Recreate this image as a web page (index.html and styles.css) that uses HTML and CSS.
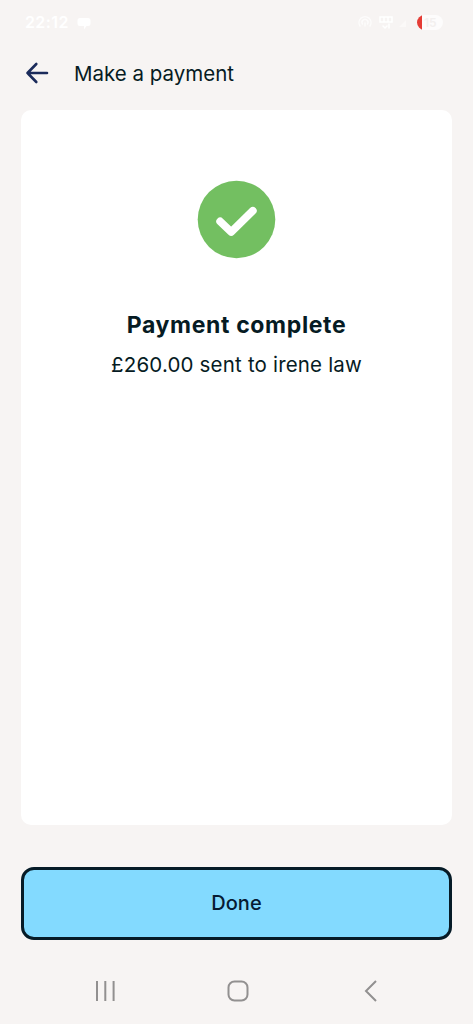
FILE: index.html
```html
<!DOCTYPE html>
<html lang="en">
<head>
<meta charset="utf-8">
<title>Make a payment</title>
<link rel="stylesheet" href="styles.css">
</head>
<body>
<div class="screen">
  <div class="status">
    <div class="status-left">
      <span class="clock">22:12</span>
      <svg class="chat" width="14" height="13" viewBox="0 0 14 13"><path d="M3 1h8q2.500 0 2.500 2.500v3q0 2.500-2.500 2.500H9.500L7 12.500V9H3Q.5 9 .5 6.500v-3Q.5 1 3 1z" fill="#fff"/></svg>
    </div>
    <div class="status-right">
      <svg width="56" height="18" viewBox="0 0 56 18" fill="none" stroke="#fff" stroke-width="1.500" stroke-linecap="round"><path d="M3 13a6 6 0 1 1 10 0M5.500 11a3 3 0 1 1 5 0M8 10v3" opacity=".7"/><path d="M23 4h12v5H23zM27 4v5M31 4v5M26 13l2 2 2-2M32 11v4"/><path d="M42 14l7-7v7z" fill="#fff" stroke="none" opacity=".45"/></svg>
      <span class="battery">15</span>
    </div>
  </div>
  <header class="header">
    <svg width="24" height="24" viewBox="0 0 24 24" fill="none" stroke="#1b2b5b" stroke-width="2.600" stroke-linecap="round" stroke-linejoin="round"><path d="M22 12H2.500M11.300 3L2.500 12l8.800 9"/></svg>
    <h1 class="title">Make a payment</h1>
  </header>
  <main class="card">
    <svg class="tick" width="78" height="78" viewBox="0 0 78 78"><circle cx="38.500" cy="38.500" r="38.800" fill="#73bf61"/><path d="M22.200 40.500L33.200 51L54.800 29.800" fill="none" stroke="#fff" stroke-width="7.800" stroke-linecap="round" stroke-linejoin="round"/></svg>
    <h2 class="heading">Payment complete</h2>
    <p class="detail">£260.00 sent to irene law</p>
  </main>
  <button class="done">Done</button>
  <nav class="nav">
    <svg width="24" height="24" viewBox="0 0 24 24" fill="none" stroke="#929090" stroke-width="2"><path d="M4 2v20M12.300 2v20M20.600 2v20"/></svg>
    <svg width="24" height="24" viewBox="0 0 24 24" fill="none" stroke="#929090" stroke-width="2"><rect x="2.500" y="2.500" width="19" height="19" rx="6"/></svg>
    <svg width="24" height="24" viewBox="0 0 24 24" fill="none" stroke="#929090" stroke-width="2"><path d="M17 2L7 12l10 10"/></svg>
  </nav>
</div>
</body>
</html>
```
FILE: styles.css
```css
* { box-sizing: border-box; }
body { margin: 0; background: #f7f4f3; }
.screen {
  height: 1024px;
  display: flex;
  flex-direction: column;
  padding: 0 21px;
  font-family: Inter, "Liberation Sans", sans-serif;
  color: #061b23;
}
.status {
  height: 44px;
  display: flex;
  justify-content: space-between;
  align-items: center;
  padding: 0 9px 0 4px;
  color: #fff;
}
.status-left, .status-right { display: flex; align-items: center; }
.status-left { gap: 8px; }
.status-right { gap: 4px; }
.clock { font-size: 16px; font-weight: 600; letter-spacing: 0.4px; }
.chat { margin-top: 2px; }
.battery {
  width: 26px;
  height: 15px;
  border-radius: 8px;
  background: linear-gradient(90deg, #e53c35 0 5px, #fdfcfc 5px);
  color: #f3f0ef;
  font-size: 12px;
  font-weight: 600;
  line-height: 15px;
  padding-left: 7px;
}
.header {
  height: 66px;
  display: flex;
  align-items: center;
  gap: 25px;
  padding: 0 4px 8px;
}
.title {
  margin: 0;
  padding-top: 2px;
  font-size: 20.500px;
  font-weight: 400;
  line-height: 26px;
  letter-spacing: 0;
}
.card {
  height: 715px;
  display: flex;
  flex-direction: column;
  align-items: center;
  padding-top: 71px;
  border-radius: 10px;
  background: #fff;
}
.tick { overflow: visible; }
.heading {
  margin: 50px 0 0;
  font-size: 23px;
  font-weight: 700;
  line-height: 32px;
  letter-spacing: 0.650px;
}
.detail {
  margin: 8px 0 0;
  font-size: 20.500px;
  line-height: 32px;
  letter-spacing: 0.180px;
}
.done {
  height: 73px;
  margin-top: 42px;
  padding: 0 0 2px;
  border: 3px solid #061b27;
  border-radius: 13px;
  background: #83daff;
  color: #061b33;
  font: 500 20px Inter, "Liberation Sans", sans-serif;
}
.nav {
  display: flex;
  justify-content: space-between;
  padding: 39px 69px 0 72px;
}
```
